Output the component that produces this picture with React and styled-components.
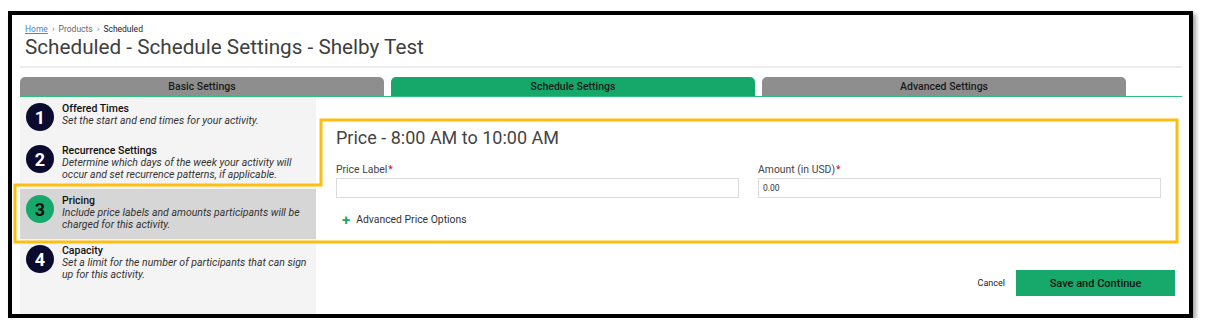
import React from "react";
import styled, { createGlobalStyle } from "styled-components";

const Global = createGlobalStyle`
  html, body { margin: 0; padding: 0; background: #fff; }
  body { font-family: Roboto, "Liberation Sans", Arial, sans-serif; }
  * { box-sizing: border-box; }
`;

const Frame = styled.div`
  position: relative;
  margin: 11px 0 0 8px;
  width: 1185px;
  height: 307px;
  border: 4px solid #000;
  background: #fff;
  box-shadow: 3px 3px 4px rgba(0, 0, 0, 0.35);
  padding: 0 7px 0 8px;
  display: flex;
  flex-direction: column;
`;

const Header = styled.div`
  padding: 8px 0 0 5px;
`;

const Crumbs = styled.div`
  display: flex;
  align-items: center;
  gap: 4px;
  font-size: 8.5px;
  line-height: 12px;
  color: #666;
`;

const CrumbLink = styled.a`
  color: #4a86c5;
  text-decoration: underline;
`;

const Sep = styled.span`
  color: #888;
  font-size: 9px;
`;

const CrumbCurrent = styled.span`
  color: #222;
`;

const Title = styled.h1`
  margin: 0;
  font-size: 20.7px;
  line-height: 25px;
  font-weight: 400;
  color: #404040;
`;

const Divider = styled.div`
  margin-top: 6px;
  height: 2px;
  background: #ececec;
`;

const Tabs = styled.div`
  margin-top: 9px;
  display: flex;
  gap: 7px;
  border-bottom: 1px solid #2fbf80;
`;

const Tab = styled.div`
  width: 364px;
  height: 19px;
  border-radius: 5px 5px 0 0;
  background: ${(p) => (p.$active ? "#16a86b" : "#8e8e8e")};
  color: #1a1a1a;
  font-size: 10.5px;
  font-weight: 500;
  display: flex;
  align-items: center;
  justify-content: center;
`;

const Body = styled.div`
  flex: 1;
  display: flex;
`;

const Sidebar = styled.div`
  width: 296px;
  background: #f4f4f4;
  display: flex;
  flex-direction: column;
`;

const Step = styled.div`
  display: flex;
  align-items: flex-start;
  gap: 8px;
  padding: 6px 6px 8px 6px;
  background: ${(p) => (p.$active ? "#d6d6d6" : "transparent")};
`;

const Circle = styled.div`
  flex: none;
  width: 28px;
  height: 28px;
  border-radius: 50%;
  background: ${(p) => (p.$active ? "#17a96c" : "#0b0b30")};
  color: ${(p) => (p.$active ? "#111" : "#fff")};
  font-size: 18px;
  font-weight: 700;
  display: flex;
  align-items: center;
  justify-content: center;
`;

const StepText = styled.div`
  display: flex;
  flex-direction: column;
  width: 250px;
`;

const StepTitle = styled.div`
  font-size: 10.5px;
  line-height: 12px;
  font-weight: 500;
  color: #111;
`;

const StepDesc = styled.div`
  font-size: 10.5px;
  line-height: 12px;
  font-style: italic;
  color: #333;
`;

const Main = styled.div`
  flex: 1;
  background: #fff;
  padding: 30px 7px 0 20px;
  display: flex;
  flex-direction: column;
`;

const Heading = styled.h2`
  margin: 0;
  font-size: 18px;
  line-height: 22px;
  font-weight: 400;
  color: #444;
`;

const Fields = styled.div`
  margin-top: 15px;
  padding-right: 14px;
  display: grid;
  grid-template-columns: 1fr 1fr;
  column-gap: 19px;
`;

const Field = styled.div`
  display: flex;
  flex-direction: column;
  gap: 2px;
`;

const Label = styled.label`
  font-size: 10.4px;
  line-height: 12px;
  color: #444;
`;

const Req = styled.span`
  color: #c8102e;
  margin-left: 1px;
`;

const Input = styled.div`
  height: 20px;
  border: 1px solid #dcdcdc;
  padding: 0 4px;
  font-size: 8.5px;
  color: #333;
  display: flex;
  align-items: center;
`;

const Advanced = styled.div`
  margin-top: 16px;
  padding-left: 6px;
  display: flex;
  align-items: center;
  gap: 6px;
  font-size: 10.4px;
  line-height: 12px;
  color: #333;
`;

const Plus = styled.span`
  color: #17a96c;
  font-size: 15px;
  font-weight: 700;
  line-height: 12px;
`;

const Footer = styled.div`
  margin-top: 44px;
  display: flex;
  justify-content: flex-end;
  align-items: center;
  gap: 11px;
`;

const Cancel = styled.span`
  font-size: 9px;
  color: #222;
`;

const SaveButton = styled.div`
  width: 159px;
  height: 26px;
  background: #17a96c;
  color: #111;
  font-size: 11px;
  font-weight: 500;
  display: flex;
  align-items: center;
  justify-content: center;
`;

const Annotation = styled.svg`
  position: absolute;
  left: 0;
  top: 0;
  width: 100%;
  height: 100%;
  pointer-events: none;
  overflow: visible;
`;

const steps = [
  { n: 1, title: "Offered Times", desc: "Set the start and end times for your activity." },
  {
    n: 2,
    title: "Recurrence Settings",
    desc: "Determine which days of the week your activity will occur and set recurrence patterns, if applicable.",
  },
  {
    n: 3,
    title: "Pricing",
    desc: "Include price labels and amounts participants will be charged for this activity.",
    active: true,
  },
  {
    n: 4,
    title: "Capacity",
    desc: "Set a limit for the number of participants that can sign up for this activity.",
  },
];

export default function App() {
  return (
    <>
      <Global />
      <Frame>
        <Header>
          <Crumbs>
            <CrumbLink>Home</CrumbLink>
            <Sep>›</Sep>
            <span>Products</span>
            <Sep>›</Sep>
            <CrumbCurrent>Scheduled</CrumbCurrent>
          </Crumbs>
          <Title>Scheduled - Schedule Settings - Shelby Test</Title>
        </Header>
        <Divider />
        <Tabs>
          <Tab>Basic Settings</Tab>
          <Tab $active>Schedule Settings</Tab>
          <Tab>Advanced Settings</Tab>
        </Tabs>
        <Body>
          <Sidebar>
            {steps.map((s) => (
              <Step key={s.n} $active={s.active}>
                <Circle $active={s.active}>{s.n}</Circle>
                <StepText>
                  <StepTitle>{s.title}</StepTitle>
                  <StepDesc>{s.desc}</StepDesc>
                </StepText>
              </Step>
            ))}
          </Sidebar>
          <Main>
            <Heading>Price - 8:00 AM to 10:00 AM</Heading>
            <Fields>
              <Field>
                <Label>
                  Price Label<Req>*</Req>
                </Label>
                <Input />
              </Field>
              <Field>
                <Label>
                  Amount (in USD)<Req>*</Req>
                </Label>
                <Input>0.00</Input>
              </Field>
            </Fields>
            <Advanced>
              <Plus>+</Plus>
              Advanced Price Options
            </Advanced>
            <Footer>
              <Cancel>Cancel</Cancel>
              <SaveButton>Save and Continue</SaveButton>
            </Footer>
          </Main>
        </Body>
        <Annotation>
          <polygon
            points="309,105 1165,105 1165,227 3,227 3,170 309,170"
            fill="none"
            stroke="#fdbf0f"
            strokeWidth="3"
          />
        </Annotation>
      </Frame>
    </>
  );
}
